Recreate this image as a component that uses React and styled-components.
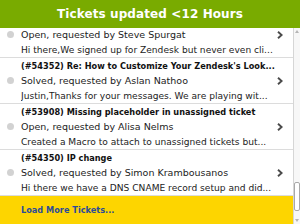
import React, { useLayoutEffect, useRef } from 'react'
import styled, { createGlobalStyle } from 'styled-components'

const GlobalStyle = createGlobalStyle`
  html, body {
    margin: 0;
    padding: 0;
    background: #fff;
  }
  body {
    font-family: "DejaVu Sans", Verdana, sans-serif;
  }
`

const Screen = styled.div`
  width: 300px;
  height: 224px;
  display: flex;
  flex-direction: column;
  overflow: hidden;
  background: #fff;
`

const Header = styled.div`
  height: 28px;
  flex: none;
  display: flex;
  align-items: center;
  justify-content: center;
  background: #79ab00;
  color: #fff;
  font-weight: bold;
  font-size: 12px;
  letter-spacing: 0.1px;
`

const Body = styled.div`
  flex: 1;
  min-height: 0;
  display: flex;
`

const List = styled.div`
  flex: 1;
  min-width: 0;
  overflow: hidden;
`

const Row = styled.div`
  display: grid;
  grid-template-columns: 21px 1fr 16px;
  grid-template-rows: 15px 15px 15px;
  align-items: center;
  border-bottom: 1px solid #dcdcdc;
`

const Title = styled.div`
  grid-column: 2 / 4;
  font-size: 8.2px;
  font-weight: bold;
  color: #111;
  white-space: nowrap;
  overflow: hidden;
`

const Bullet = styled.span`
  grid-column: 1;
  justify-self: center;
  width: 7px;
  height: 7px;
  margin-left: -1px;
  border-radius: 50%;
  background: #d2d2d2;
`

const Line = styled.div`
  grid-column: 2;
  font-size: ${p => (p.$small ? '9.1px' : '9.5px')};
  color: #1c1c1c;
  white-space: nowrap;
  overflow: hidden;
`

const Chevron = styled.svg`
  grid-column: 3;
  justify-self: start;
  width: 6px;
  height: 8px;
`

const LoadMore = styled.div`
  height: 28px;
  display: flex;
  align-items: center;
  padding-left: 21px;
  background: #fdd500;
  color: #2c4c98;
  font-size: 8.2px;
  font-weight: bold;
`

const Track = styled.div`
  width: 6px;
  flex: none;
  display: flex;
  flex-direction: column;
  align-items: center;
  border-left: 1px solid #d6d6d6;
  background: #f7f7f7;
`

const Spacer = styled.div`
  flex: 1;
`

const Thumb = styled.div`
  width: 4px;
  height: 27px;
  margin-bottom: 8px;
  border: 1px solid #a8a8a8;
  border-radius: 2px;
  background: #fff;
`

const Arrow = styled.svg`
  width: 4px;
  height: 3px;
  margin: ${p => (p.$down ? '0 0 2px' : '2px 0 0')};
`

const tickets = [
  {
    title: '(#54360) Zendesk setup question',
    status: 'Open, requested by Steve Spurgat',
    preview: 'Hi there,We signed up for Zendesk but never even cli...',
  },
  {
    title: "(#54352) Re: How to Customize Your Zendesk's Look...",
    status: 'Solved, requested by Aslan Nathoo',
    preview: 'Justin,Thanks for your messages. We are playing wit...',
  },
  {
    title: '(#53908) Missing placeholder in unassigned ticket',
    status: 'Open, requested by Alisa Nelms',
    preview: 'Created a Macro to attach to unassigned tickets but...',
  },
  {
    title: '(#54350) IP change',
    status: 'Solved, requested by Simon Krambousanos',
    preview: 'Hi there we have a DNS CNAME record setup and did...',
  },
]

function TicketRow({ ticket }) {
  return (
    <Row>
      <Title>{ticket.title}</Title>
      <Bullet />
      <Line>{ticket.status}</Line>
      <Chevron viewBox="0 0 6 8">
        <path d="M1 0.8 L4.6 4 L1 7.2" fill="none" stroke="#4a4a4a" strokeWidth="1.9" />
      </Chevron>
      <Line $small>{ticket.preview}</Line>
    </Row>
  )
}

export default function App() {
  const listRef = useRef(null)

  // list is scrolled all the way down
  useLayoutEffect(() => {
    if (listRef.current) listRef.current.scrollTop = listRef.current.scrollHeight
  }, [])

  return (
    <>
      <GlobalStyle />
      <Screen>
        <Header>Tickets updated &lt;12 Hours</Header>
        <Body>
          <List ref={listRef}>
            {tickets.map(t => <TicketRow key={t.title} ticket={t} />)}
            <LoadMore>Load More Tickets...</LoadMore>
          </List>
          <Track>
            <Arrow viewBox="0 0 4 3"><path d="M0 3 L2 0 L4 3 Z" fill="#b5b5b5" /></Arrow>
            <Spacer />
            <Thumb />
            <Arrow $down viewBox="0 0 4 3"><path d="M0 0 L2 3 L4 0 Z" fill="#b5b5b5" /></Arrow>
          </Track>
        </Body>
      </Screen>
    </>
  )
}
